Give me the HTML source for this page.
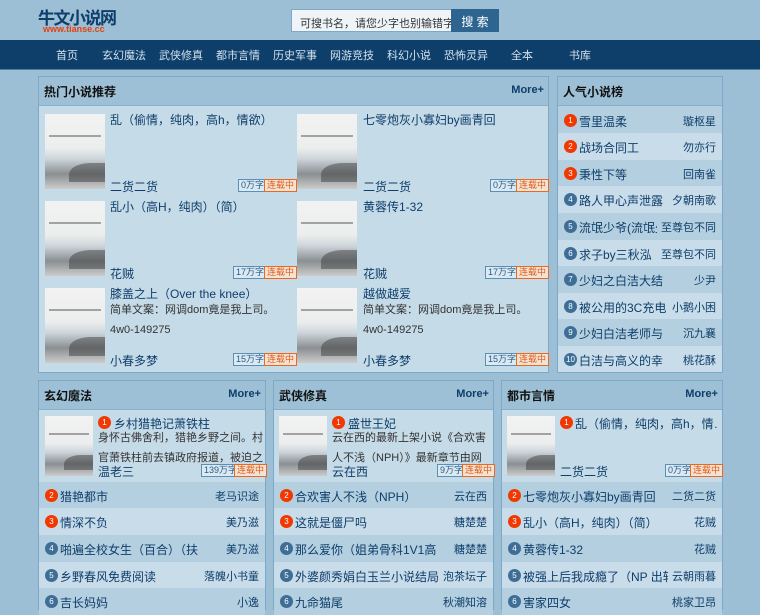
<!DOCTYPE html>
<html><head><meta charset="utf-8"><style>
*{margin:0;padding:0;box-sizing:border-box}
body{width:760px;height:600px;overflow:hidden;background:#9cbfd5;font-family:"Liberation Sans","Noto Sans CJK SC",sans-serif;position:relative;color:#0e3e6a}
.a{position:absolute;white-space:nowrap}
.logo{left:38px;top:4px;font-size:17px;font-weight:bold;color:#0e3e6a;letter-spacing:-1.5px}
.url{left:43px;top:25px;font-size:9px;line-height:9px;font-weight:bold;color:#e8400a}
.sin{left:291px;top:9px;width:161px;height:23px;background:#eef4f8;border:1px solid #7fa8c6;font-size:11px;color:#333;padding:5px 0 0 8px;overflow:hidden}
.sbt{left:451px;top:9px;width:48px;height:23px;background:#2d6490;color:#fff;font-size:12px;text-align:center;padding-top:4px}
.nav{left:0;top:40px;width:760px;height:30px;background:#0e3e6a;border-bottom:1px solid #4d7ea8}
.nav span{position:absolute;top:7px;font-size:11px;color:#d2e2ef}
.box{position:absolute;border:1px solid #7aa9c9;background:#c6dbe8}
.hd{height:29px;background:#9dc0d6;border-bottom:1px solid #86b0cc;font-size:12px;font-weight:bold;color:#111;padding:6px 0 0 5px;position:relative}
.hd b{position:absolute;right:4px;top:7px;font-size:11px;color:#0e3e6a}
.cov{position:absolute;background:linear-gradient(180deg,#f2f2f2 0%,#eceeee 45%,#cdd5da 60%,#8a8f92 80%,#ccc 100%);overflow:hidden}
.cov i{position:absolute;left:4px;right:4px;top:28%;height:2px;background:#555;opacity:.5}
.cov em{position:absolute;right:0;bottom:10%;width:60%;height:25%;background:#333;opacity:.45;border-radius:60% 0 0 0}
.t{font-size:12px;color:#0e3e6a}
.tg{position:absolute;font-size:9px;height:13px;line-height:11px;padding:0 2px;border:1px solid}
.tb{color:#2a5b86;border-color:#5a8fb8;background:#dbe9f2}
.to{color:#e25a10;border-color:#e86a20;background:#f3e2d6}
.row{position:absolute;height:27px;font-size:12px;color:#0e3e6a;white-space:nowrap;overflow:hidden}
.row .n{position:absolute;top:7px;width:13px;height:13px;border-radius:50%;color:#fff;font-size:8px;text-align:center;line-height:13px}
.r{background:#f03800}.g{background:#3e6e96}
.row .ti{position:absolute;top:6px;white-space:nowrap}
.row .au{position:absolute;top:6px;right:6px;font-size:11px;padding-left:4px}
.desc{font-size:11px;color:#333;line-height:20px;white-space:normal}
</style></head><body>
<div class="a logo">牛文小说网</div>
<div class="a url">www.tianse.cc</div>
<div class="a sin">可搜书名，请您少字也别输错字</div>
<div class="a sbt">搜 索</div>
<div class="a nav">
<span style="left:56px">首页</span><span style="left:102px">玄幻魔法</span><span style="left:159px">武侠修真</span><span style="left:216px">都市言情</span><span style="left:273px">历史军事</span><span style="left:330px">网游竞技</span><span style="left:387px">科幻小说</span><span style="left:444px">恐怖灵异</span><span style="left:511px">全本</span><span style="left:569px">书库</span>
</div>

<div class="box" style="left:38px;top:76px;width:511px;height:297px">
<div class="hd">热门小说推荐<b>More+</b></div>
</div>
<div class="cov a" style="left:45px;top:114px;width:60px;height:75px"><i></i><em></em></div>
<div class="a t" style="left:110px;top:111px">乱（偷情，纯肉，高h，情欲）</div>
<div class="a t" style="left:110px;top:178px">二货二货</div>
<div class="tg tb" style="left:238px;top:179px">0万字</div><div class="tg to" style="left:264px;top:179px">连载中</div>

<div class="cov a" style="left:297px;top:114px;width:60px;height:75px"><i></i><em></em></div>
<div class="a t" style="left:363px;top:111px">七零炮灰小寡妇by画青回</div>
<div class="a t" style="left:363px;top:178px">二货二货</div>
<div class="tg tb" style="left:490px;top:179px">0万字</div><div class="tg to" style="left:516px;top:179px">连载中</div>

<div class="cov a" style="left:45px;top:201px;width:60px;height:75px"><i></i><em></em></div>
<div class="a t" style="left:110px;top:198px">乱小（高H，纯肉）（简）</div>
<div class="a t" style="left:110px;top:265px">花贼</div>
<div class="tg tb" style="left:233px;top:266px">17万字</div><div class="tg to" style="left:264px;top:266px">连载中</div>

<div class="cov a" style="left:297px;top:201px;width:60px;height:75px"><i></i><em></em></div>
<div class="a t" style="left:363px;top:198px">黄蓉传1-32</div>
<div class="a t" style="left:363px;top:265px">花贼</div>
<div class="tg tb" style="left:485px;top:266px">17万字</div><div class="tg to" style="left:516px;top:266px">连载中</div>

<div class="cov a" style="left:45px;top:288px;width:60px;height:75px"><i></i><em></em></div>
<div class="a t" style="left:110px;top:285px">膝盖之上（Over the knee）</div>
<div class="a desc" style="left:110px;top:300px;width:186px">简单文案：网调dom竟是我上司。4w0-149275</div>
<div class="a t" style="left:110px;top:352px">小春多梦</div>
<div class="tg tb" style="left:233px;top:353px">15万字</div><div class="tg to" style="left:264px;top:353px">连载中</div>

<div class="cov a" style="left:297px;top:288px;width:60px;height:75px"><i></i><em></em></div>
<div class="a t" style="left:363px;top:285px">越做越爱</div>
<div class="a desc" style="left:363px;top:300px;width:186px">简单文案：网调dom竟是我上司。4w0-149275</div>
<div class="a t" style="left:363px;top:352px">小春多梦</div>
<div class="tg tb" style="left:485px;top:353px">15万字</div><div class="tg to" style="left:516px;top:353px">连载中</div>

<div class="box" style="left:557px;top:76px;width:166px;height:297px;background:#b4cfe0">
<div class="hd">人气小说榜</div>
</div>
<div id="rank"></div>

<div class="box" style="left:38px;top:380px;width:228px;height:230px">
<div class="hd">玄幻魔法<b>More+</b></div></div>
<div class="box" style="left:273px;top:380px;width:221px;height:230px">
<div class="hd">武侠修真<b>More+</b></div></div>
<div class="box" style="left:501px;top:380px;width:222px;height:230px">
<div class="hd">都市言情<b>More+</b></div></div>

<div class="cov a" style="left:45px;top:416px;width:48px;height:60px"><i></i><em></em></div>
<div class="row" style="left:98px;top:409px;width:160px"><span class="n r" style="left:0">1</span><span class="ti" style="left:16px">乡村猎艳记萧铁柱</span></div>
<div class="a desc" style="left:98px;top:428px;width:165px;height:40px;overflow:hidden">身怀古佛舍利，猎艳乡野之间。村官萧铁柱前去镇政府报道，被迫之下和</div>
<div class="a t" style="left:98px;top:463px">温老三</div>
<div class="tg tb" style="left:201px;top:464px">139万字</div><div class="tg to" style="left:234px;top:464px">连载中</div>

<div class="cov a" style="left:279px;top:416px;width:48px;height:60px"><i></i><em></em></div>
<div class="row" style="left:332px;top:409px;width:150px"><span class="n r" style="left:0">1</span><span class="ti" style="left:16px">盛世王妃</span></div>
<div class="a desc" style="left:332px;top:428px;width:158px;height:40px;overflow:hidden">云在西的最新上架小说《合欢害人不浅（NPH）》最新章节由网友提供，</div>
<div class="a t" style="left:332px;top:463px">云在西</div>
<div class="tg tb" style="left:437px;top:464px">9万字</div><div class="tg to" style="left:462px;top:464px">连载中</div>

<div class="cov a" style="left:507px;top:416px;width:48px;height:60px"><i></i><em></em></div>
<div class="row" style="left:560px;top:409px;width:158px"><span class="n r" style="left:0">1</span><span class="ti" style="left:15px">乱（偷情，纯肉，高h，情…</span></div>
<div class="a t" style="left:560px;top:463px">二货二货</div>
<div class="tg tb" style="left:665px;top:464px">0万字</div><div class="tg to" style="left:690px;top:464px">连载中</div>
<div id="lists"></div>

<script>
function rows(x,w,y0,h,items,topn){var s='';items.forEach(function(it,i){var bg=i%2==0?'#b4cfe0':'#c8dcea';s+='<div class="row" style="left:'+x+'px;top:'+(y0+i*h)+'px;width:'+w+'px;height:'+h+'px;background:'+bg+'"><span class="n '+(i+topn<=3?'r':'g')+'" style="left:6px">'+(i+topn)+'</span><span class="ti" style="left:21px">'+it[0]+'</span><span class="au" style="background:'+bg+'">'+it[1]+'</span></div>';});return s;}
document.getElementById('rank').innerHTML=rows(558,164,106.5,26.6,[["雪里温柔","璇枢星"],["战场合同工","勿亦行"],["秉性下等","回南雀"],["路人甲心声泄露","夕朝南歌"],["流氓少爷(流氓少","至尊包不同"],["求子by三秋泓","至尊包不同"],["少妇之白洁大结","少尹"],["被公用的3C充电","小鹅小困"],["少妇白洁老师与","沉九襄"],["白洁与高义的幸","桃花酥"]],1);
document.getElementById('lists').innerHTML=
rows(39,226,481.5,26.7,[["猎艳都市","老马识途"],["情深不负","美乃滋"],["啪遍全校女生（百合）（扶","美乃滋"],["乡野春风免费阅读","落魄小书童"],["吉长妈妈","小逸"]],2)+
rows(274,219,481.5,26.7,[["合欢害人不浅（NPH）","云在西"],["这就是僵尸吗","糖楚楚"],["那么爱你（姐弟骨科1V1高","糖楚楚"],["外婆颜秀娟白玉兰小说结局","泡茶坛子"],["九命猫尾","秋潮知溶"]],2)+
rows(502,220,481.5,26.7,[["七零炮灰小寡妇by画青回","二货二货"],["乱小（高H，纯肉）（简）","花贼"],["黄蓉传1-32","花贼"],["被强上后我成瘾了（NP 出轨","云朝雨暮"],["害家四女","桃家卫昂"]],2);
</script>
</body></html>
